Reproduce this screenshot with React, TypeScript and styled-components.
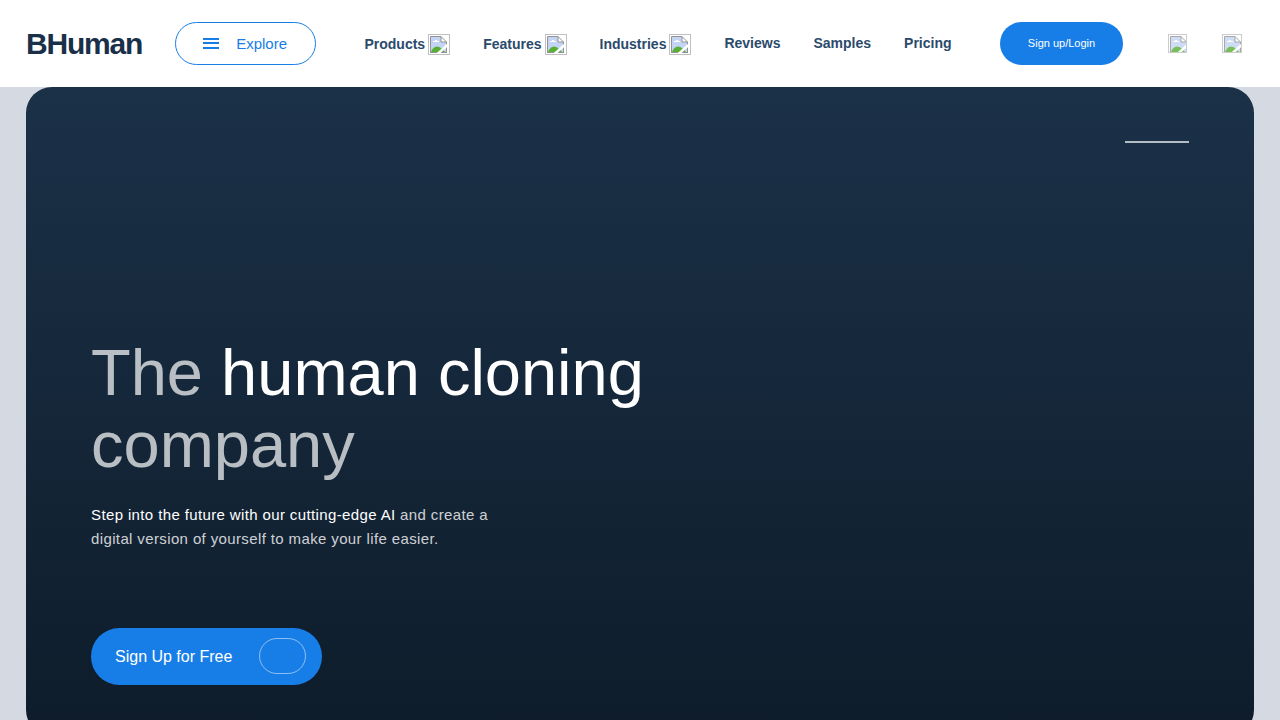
import React from "react";
import styled, { createGlobalStyle } from "styled-components";

const blue = "#187ee7";

const GlobalStyle = createGlobalStyle`
  *, *::before, *::after { box-sizing: border-box; }
  body {
    margin: 0;
    background: #d5d9e2;
    font-family: "Liberation Sans", Arial, sans-serif;
  }
  button { font-family: inherit; cursor: pointer; }
  a { text-decoration: none; }
`;

const Header = styled.header`
  display: flex;
  align-items: center;
  padding: 22px 38px 22px 26px;
  background: #fff;
`;

const Logo = styled.a`
  margin-right: 33px;
  color: #1a3049;
  font-size: 30px;
  font-weight: 700;
  line-height: 36px;
  letter-spacing: -0.04em;
`;

const ExploreButton = styled.button`
  display: flex;
  align-items: center;
  gap: 17px;
  height: 43px;
  padding: 0 28px 1px 27px;
  border: 1px solid ${blue};
  border-radius: 22px;
  background: #fff;
  color: ${blue};
  font-size: 15px;
`;

const Bars = styled.span`
  display: flex;
  flex-direction: column;
  justify-content: space-between;
  width: 16px;
  height: 11px;
`;

const Bar = styled.span`
  height: 2px;
  background: ${blue};
`;

const Nav = styled.nav`
  display: flex;
  flex: 1;
  align-items: center;
  justify-content: center;
  gap: 33px;
`;

const NavLink = styled.a<{ $menu: boolean }>`
  display: flex;
  align-items: center;
  gap: 3px;
  padding: ${(p) => (p.$menu ? "1px 0 0" : "0 0 1px")};
  color: #2b4a6b;
  font-size: 14px;
  font-weight: 700;
  line-height: 20px;
`;

const LoginButton = styled.button`
  width: 123px;
  height: 43px;
  padding: 0 0 1px;
  border: 0;
  border-radius: 22px;
  background: ${blue};
  color: #fff;
  font-size: 11px;
`;

const Actions = styled.div`
  display: flex;
  align-items: center;
  gap: 35px;
  margin-left: 45px;
`;

const ImageFrame = styled.span<{ $w: number; $h: number; $muted?: boolean }>`
  display: block;
  flex: none;
  width: ${(p) => p.$w}px;
  height: ${(p) => p.$h}px;
  padding: 1px;
  overflow: hidden;
  border: 1px solid #c0c0c0;
  opacity: ${(p) => (p.$muted ? 0.8 : 1)};

  svg { display: block; }
`;

const Main = styled.main`
  padding: 0 26px;
`;

const Hero = styled.section`
  display: flex;
  flex-direction: column;
  align-items: flex-start;
  min-height: 649px;
  padding: 54px 65px 51px;
  border-radius: 26px;
  background: linear-gradient(#1b3148, #0e1c2a);
`;

const Rule = styled.hr`
  width: 64px;
  height: 2px;
  margin: 0 0 auto auto;
  border: 0;
  background: #b3bdc6;
`;

const Title = styled.h1`
  max-width: 614px;
  margin: 0;
  color: rgba(255, 255, 255, 0.7);
  font-size: 65px;
  font-weight: 400;
  line-height: 72px;
`;

const Bright = styled.span`
  color: #fff;
`;

const Lead = styled.p`
  max-width: 430px;
  margin: 22px 0 77px;
  color: rgba(255, 255, 255, 0.8);
  font-size: 15px;
  line-height: 24px;
  letter-spacing: 0.025em;
`;

const SignUpButton = styled.button`
  display: flex;
  align-items: center;
  justify-content: space-between;
  width: 231px;
  height: 57px;
  padding: 0 16px 0 24px;
  border: 0;
  border-radius: 29px;
  background: ${blue};
  color: #fff;
  font-size: 16px;
`;

const Pill = styled.span`
  width: 47px;
  height: 36px;
  margin-bottom: 1px;
  border: 1px solid rgba(255, 255, 255, 0.5);
  border-radius: 18px;
`;

function ImageIcon({ w = 22, h = 21, muted = false }: { w?: number; h?: number; muted?: boolean }) {
  return (
    <ImageFrame $w={w} $h={h} $muted={muted} aria-hidden="true">
      <svg width="17" height="17" viewBox="0 0 17 17">
        <path d="M1 1h10l5 5v11H1z" fill="#c3d4f5" />
        <path d="M3 6V5h2V4h2v1h2v1z" fill="#fff" />
        <path d="M1 16c1-3 3-5.500 6-5.500s6 2.500 8 5.500z" fill="#57b033" />
        <path d="M11 0v6h6z" fill="#fff" />
        <path d="M.5 17V.5H11l5.500 5.500v11M0 16.500h17M11 .5V6h5.500" fill="none" stroke="#929292" />
        <path d="M7.500 18l10-9" fill="none" stroke="#fff" strokeWidth="2.500" />
      </svg>
    </ImageFrame>
  );
}

const links = [
  { label: "Products", menu: true },
  { label: "Features", menu: true },
  { label: "Industries", menu: true },
  { label: "Reviews", menu: false },
  { label: "Samples", menu: false },
  { label: "Pricing", menu: false },
];

export default function App() {
  return (
    <>
      <GlobalStyle />
      <Header>
        <Logo href="#">BHuman</Logo>
        <ExploreButton type="button">
          <Bars><Bar /><Bar /><Bar /></Bars>
          Explore
        </ExploreButton>
        <Nav>
          {links.map(({ label, menu }) => (
            <NavLink key={label} href="#" $menu={menu}>
              {label}
              {menu && <ImageIcon />}
            </NavLink>
          ))}
        </Nav>
        <LoginButton type="button">Sign up/Login</LoginButton>
        <Actions>
          <ImageIcon w={19} h={19} muted />
          <ImageIcon w={20} h={19} muted />
        </Actions>
      </Header>
      <Main>
        <Hero>
          <Rule />
          <Title>The <Bright>human cloning</Bright> company</Title>
          <Lead>
            <Bright>Step into the future with our cutting-edge AI</Bright> and create a
            digital version of yourself to make your life easier.
          </Lead>
          <SignUpButton type="button">
            Sign Up for Free
            <Pill />
          </SignUpButton>
        </Hero>
      </Main>
    </>
  );
}
